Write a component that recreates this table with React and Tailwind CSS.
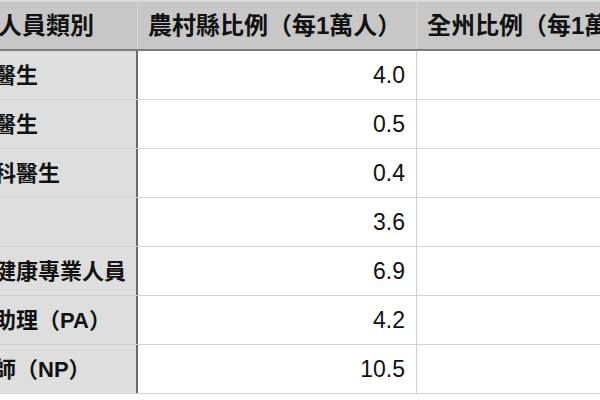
const rows = [
  { label: '家庭醫生', rural: '4.0' },
  { label: '牙科醫生', rural: '0.5' },
  { label: '精神科醫生', rural: '0.4' },
  { label: '護士', rural: '3.6' },
  { label: '心理健康專業人員', rural: '6.9' },
  { label: '醫師助理（PA）', rural: '4.2' },
  { label: '護理師（NP）', rural: '10.5' },
]

const font = { fontFamily: '"Liberation Sans", "Noto Sans CJK TC", sans-serif' }

export default function App() {
  return (
    <div className="w-[600px] h-[400px] overflow-hidden bg-white text-[#111]" style={font}>
      <div className="ml-[-58px] w-[800px]">
        <div className="flex h-[51px] border-t-2 border-b-2 border-[#dadada] border-b-[#7c7c7c] bg-[#c7c7c7] font-bold text-[24px]">
          <div className="w-[196px] shrink-0 border-r border-[#d4d4d4] flex items-center pl-[8px] whitespace-nowrap overflow-hidden">
            醫事人員類別
          </div>
          <div className="w-[279px] shrink-0 border-r border-[#d4d4d4] flex items-center pl-[10px] whitespace-nowrap">
            農村縣比例（每1萬人）
          </div>
          <div className="flex-1 flex items-center pl-[10px] whitespace-nowrap">
            全州比例（每1萬人）
          </div>
        </div>
        {rows.map((r) => (
          <div key={r.label} className="flex h-[49px] border-b border-[#d2d2d2]">
            <div className="w-[196px] shrink-0 bg-[#dedede] border-r-2 border-[#6a6a6a] flex items-center pl-[8px] font-bold text-[22px] whitespace-nowrap overflow-hidden">
              {r.label}
            </div>
            <div className="w-[279px] shrink-0 border-r border-[#cfcfcf] flex items-center justify-end pr-[11px] text-[23px]">
              {r.rural}
            </div>
            <div className="flex-1" />
          </div>
        ))}
      </div>
    </div>
  )
}
